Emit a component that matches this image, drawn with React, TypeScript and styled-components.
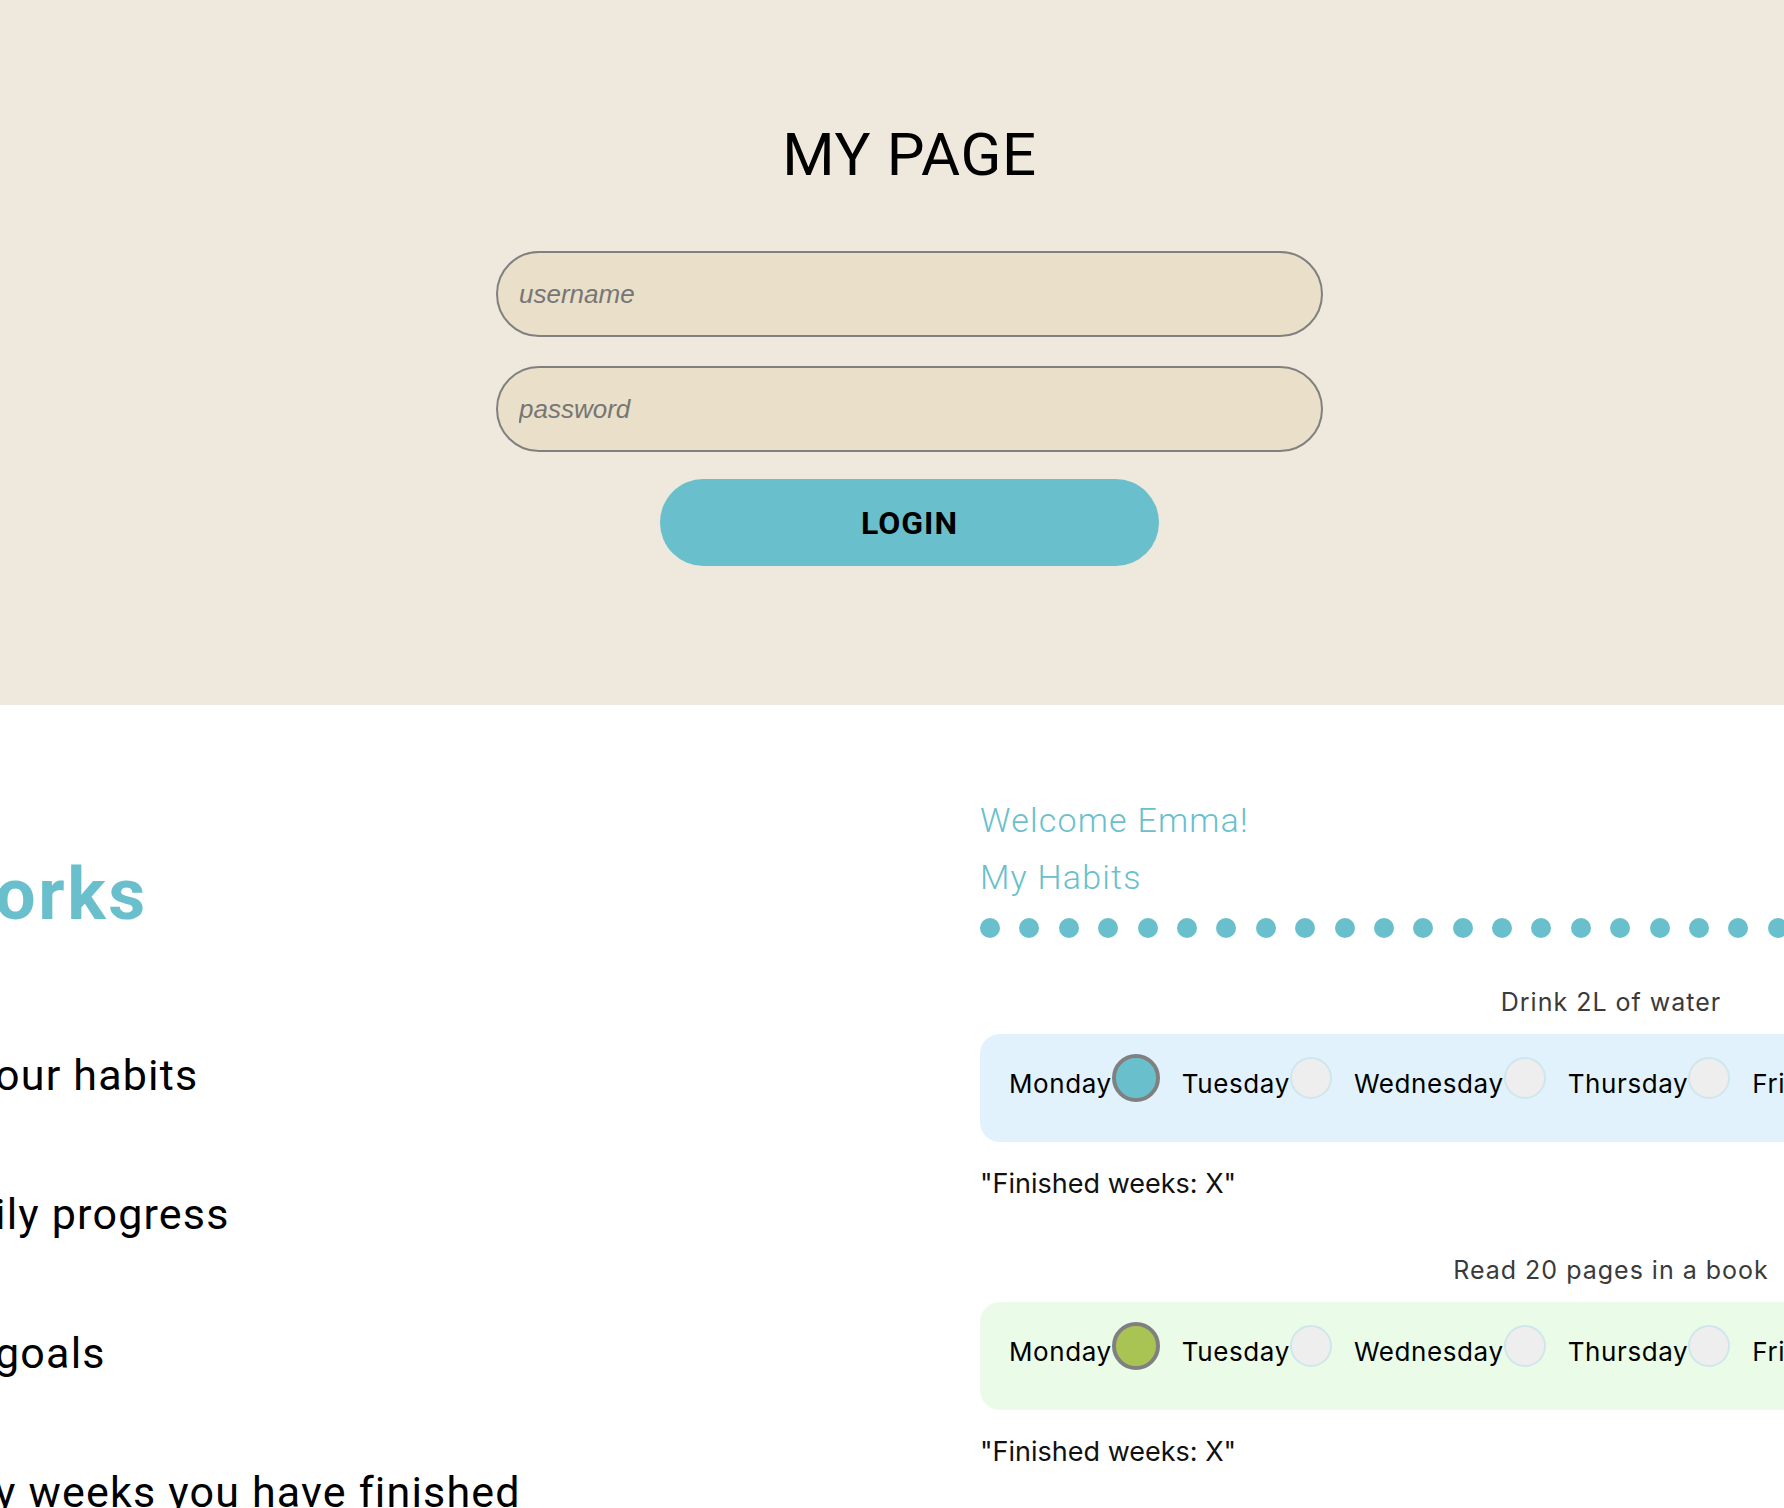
import React from "react";
import styled, { createGlobalStyle } from "styled-components";

const GlobalStyle = createGlobalStyle`
  html, body {
    margin: 0;
    padding: 0;
    background: #ffffff;
    overflow-x: hidden;
    scrollbar-width: none;
  }
  html::-webkit-scrollbar, body::-webkit-scrollbar { display: none; }
  * { box-sizing: border-box; }
`;

const TEAL = "#69c0cc";

const Page = styled.div`
  width: 1819px;
  font-family: Roboto, "Liberation Sans", sans-serif;
  color: #000;
`;

const Hero = styled.section`
  height: 705px;
  background: #efe8dc;
  display: flex;
  flex-direction: column;
  align-items: center;
  padding-top: 125px;
`;

const Title = styled.h1`
  margin: 0 0 66px;
  font-family: Roboto, sans-serif;
  font-weight: 400;
  font-size: 60px;
  line-height: 1;
  letter-spacing: 0.6px;
`;

const LoginForm = styled.form`
  display: flex;
  flex-direction: column;
  align-items: center;
  gap: 29px;
`;

const Field = styled.input`
  width: 827px;
  height: 86px;
  border: 2px solid #808080;
  border-radius: 43px;
  background: #eadfc8;
  padding: 0 21px;
  font-family: "Liberation Sans", Arial, sans-serif;
  font-style: italic;
  font-size: 26px;
  color: #333;
  outline: none;
  &::placeholder { color: #767676; }
`;

const LoginButton = styled.button`
  width: 499px;
  height: 87px;
  margin-top: -2px;
  border: none;
  border-radius: 44px;
  background: ${TEAL};
  font-family: Roboto, sans-serif;
  font-weight: 700;
  font-size: 32px;
  letter-spacing: 1px;
  color: #000;
  cursor: pointer;
`;

const Content = styled.section`
  display: grid;
  grid-template-columns: 980px 1fr;
  overflow: hidden;
`;

const Intro = styled.div`
  display: flex;
  flex-direction: column;
  padding-top: 154px;
  margin-left: -5px;
`;

const Line = styled.p<{ $bold?: boolean }>`
  display: flex;
  margin: 0;
  white-space: nowrap;
  font-family: Roboto, sans-serif;
  font-weight: ${(p) => (p.$bold ? 700 : 400)};
  font-size: ${(p) => (p.$bold ? "72px" : "43px")};
  letter-spacing: ${(p) => (p.$bold ? "2.6px" : "1.2px")};
  line-height: 1;
  color: ${(p) => (p.$bold ? TEAL : "#000")};
`;

const Hidden = styled.span`
  display: flex;
  justify-content: flex-end;
  width: 0;
`;

const Steps = styled.div`
  display: flex;
  flex-direction: column;
  gap: 96px;
  margin-top: 123px;
`;

const Dashboard = styled.div`
  display: flex;
  flex-direction: column;
  padding-top: 98px;
`;

const Greeting = styled.h2`
  margin: 0 0 23px;
  font-family: Roboto, sans-serif;
  font-weight: 300;
  font-size: 34px;
  line-height: 1;
  letter-spacing: 1.2px;
  color: ${TEAL};
`;

const Dots = styled.div`
  display: flex;
  gap: 19.4px;
  margin-top: 1px;
  margin-bottom: 52px;
`;

const Dot = styled.span`
  flex: none;
  width: 20px;
  height: 20px;
  border-radius: 50%;
  background: ${TEAL};
`;

const Habit = styled.div`
  width: 1262px;
  display: flex;
  flex-direction: column;
  margin-bottom: 61px;
  font-family: Inter, "Noto Sans", sans-serif;
`;

const HabitName = styled.div`
  text-align: center;
  font-size: 25px;
  line-height: 1;
  letter-spacing: 1px;
  color: #3a3a3a;
  margin-bottom: 19px;
`;

const Week = styled.div<{ $tint: string }>`
  height: 108px;
  border-radius: 20px;
  background: ${(p) => p.$tint};
  padding: 20px 29px 40px;
  display: flex;
  align-items: center;
  gap: 22px;
  overflow: hidden;
`;

const Day = styled.label`
  display: flex;
  align-items: center;
  flex: none;
`;

const DayName = styled.span`
  margin-top: 11px;
  font-size: 26px;
  line-height: 1;
  letter-spacing: 0.6px;
  color: #000;
`;

const Check = styled.span<{ $on: boolean; $fill: string }>`
  flex: none;
  width: ${(p) => (p.$on ? "48px" : "42px")};
  height: ${(p) => (p.$on ? "48px" : "42px")};
  border-radius: 50%;
  border: ${(p) => (p.$on ? "4px solid #808080" : "2px solid #cfe6ec")};
  background: ${(p) => (p.$on ? p.$fill : "#eeeeee")};
`;

const Finished = styled.div`
  margin-top: 28px;
  font-size: 27px;
  line-height: 1;
  color: #111;
`;

const days = ["Monday", "Tuesday", "Wednesday", "Thursday", "Friday", "Saturday", "Sunday"];

const habits = [
  { name: "Drink 2L of water", tint: "#e1f2fc", fill: TEAL },
  { name: "Read 20 pages in a book", tint: "#eafbe8", fill: "#a9c452" },
];

const steps: [string, string][] = [
  ["Track y", "our habits"],
  ["See your da", "ily progress"],
  ["Reach your ", "goals"],
  ["See how man", "y weeks you have finished"],
];

export default function App() {
  return (
    <>
      <GlobalStyle />
      <Page>
        <Hero>
          <Title>MY PAGE</Title>
          <LoginForm onSubmit={(e) => e.preventDefault()}>
            <Field type="text" placeholder="username" />
            <Field type="password" placeholder="password" />
            <LoginButton type="submit">LOGIN</LoginButton>
          </LoginForm>
        </Hero>
        <Content>
          <Intro>
            <Line $bold>
              <Hidden>How it w</Hidden>
              orks
            </Line>
            <Steps>
              {steps.map(([hid, vis]) => (
                <Line key={vis}>
                  <Hidden>{hid}</Hidden>
                  {vis}
                </Line>
              ))}
            </Steps>
          </Intro>
          <Dashboard>
            <Greeting>Welcome Emma!</Greeting>
            <Greeting>My Habits</Greeting>
            <Dots>
              {Array.from({ length: 24 }).map((_, i) => (
                <Dot key={i} />
              ))}
            </Dots>
            {habits.map((h) => (
              <Habit key={h.name}>
                <HabitName>{h.name}</HabitName>
                <Week $tint={h.tint}>
                  {days.map((d, i) => (
                    <Day key={d}>
                      <DayName>{d}</DayName>
                      <Check $on={i === 0} $fill={h.fill} />
                    </Day>
                  ))}
                </Week>
                <Finished>"Finished weeks: X"</Finished>
              </Habit>
            ))}
          </Dashboard>
        </Content>
      </Page>
    </>
  );
}
